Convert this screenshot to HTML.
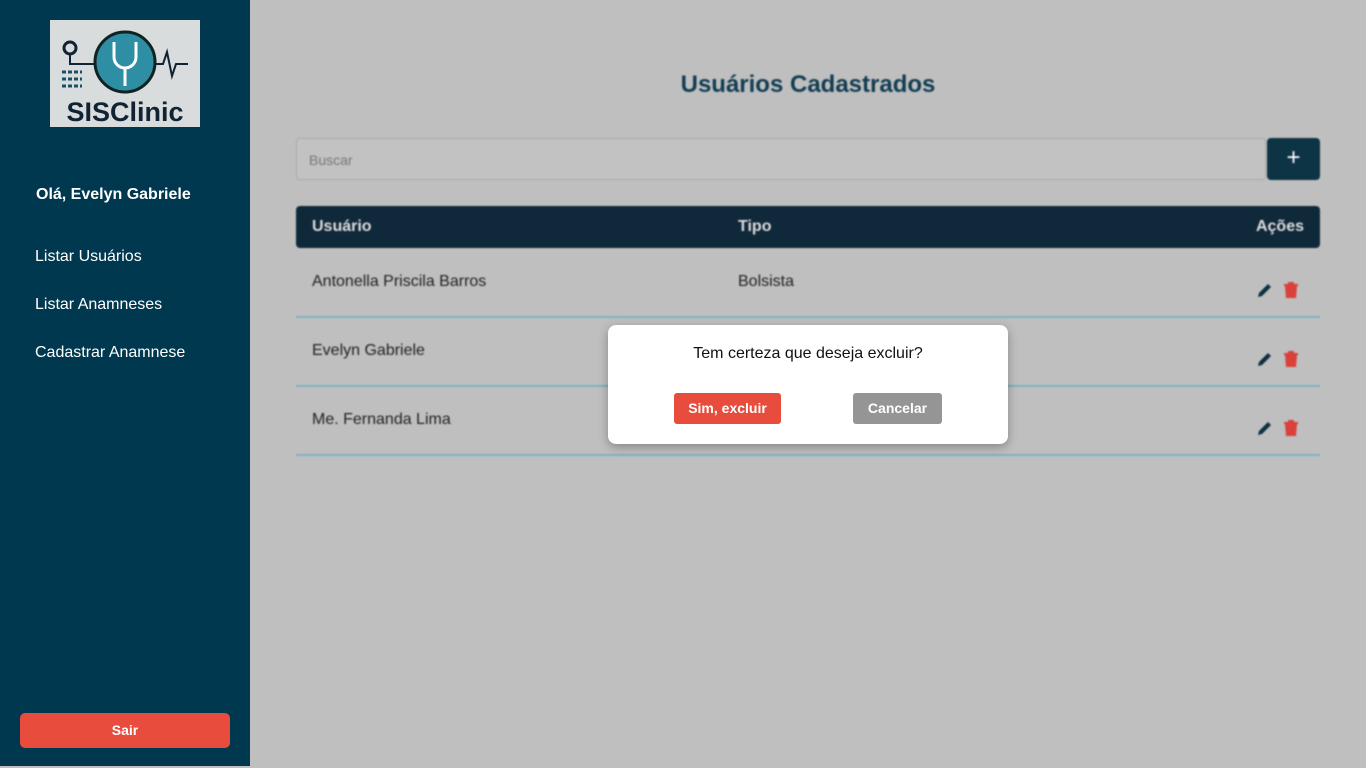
<!DOCTYPE html>
<html><head><meta charset="utf-8"><style>
*{margin:0;padding:0;box-sizing:border-box}
body{width:1366px;height:768px;overflow:hidden;font-family:"Liberation Sans",sans-serif;background:#bfbfbf;position:relative}
.side{position:absolute;left:0;top:0;width:250px;height:766px;background:#00384f;color:#fff}
.logo{position:absolute;left:50px;top:20px;width:150px;height:107px;background:#d8dcdc}
.hello{position:absolute;left:36px;top:186px;font-weight:bold;font-size:16px}
.nav{position:absolute;left:35px;font-size:16px}
.sair{position:absolute;left:20px;top:713px;width:210px;height:35px;background:#e74c3c;border-radius:5px;color:#fff;font-weight:bold;font-size:14px;text-align:center;line-height:35px}
.main{position:absolute;left:250px;top:0;right:0;height:766px;filter:blur(0.8px)}
h1{position:absolute;left:0;right:0;top:71px;text-align:center;font-size:24px;color:#123d52}
.search{position:absolute;left:46px;top:138px;width:970px;height:42px;border:1px solid #aaa;border-radius:4px;background:#c2c2c2;font-size:14px;color:#777;padding:13px 12px}
.add{position:absolute;left:1017px;top:138px;width:53px;height:42px;background:#0c3444;border-radius:4px;color:#fff;font-size:24px;text-align:center;line-height:40px}
.th{position:absolute;left:46px;top:206px;width:1024px;height:42px;background:#10293a;border-radius:4px;color:#ddd;font-weight:bold;font-size:16px}
.th span,.row span{position:absolute;top:12px}
.row{position:absolute;left:46px;width:1024px;height:69px;border-bottom:2px solid #7fb3c2;font-size:16px;color:#222}
.ic{position:absolute;top:32px}
.modal{position:absolute;left:608px;top:325px;width:400px;height:119px;background:#fff;border-radius:8px;box-shadow:0 3px 10px rgba(0,0,0,.3);text-align:center}
.modal p{margin-top:20px;font-size:16px;color:#111}
.b{position:absolute;top:68px;height:31px;line-height:31px;color:#fff;font-weight:bold;font-size:14px;border-radius:3px}
</style></head><body>
<div class="side">
<div class="logo"><svg width="150" height="107" viewBox="0 0 150 107">
<circle cx="20" cy="28" r="6" fill="none" stroke="#123" stroke-width="3"/><path d="M20 34v10h28" stroke="#123" stroke-width="2" fill="none"/>
<circle cx="75" cy="42" r="30" fill="#2e8ea3" stroke="#122" stroke-width="3"/>
<path d="M64 22v15a11 11 0 0 0 22 0v-15M75 48v18" stroke="#fff" stroke-width="3" fill="none"/>
<path d="M105 44h8l4-12 5 24 4-12h12" stroke="#123" stroke-width="2" fill="none"/>
<path d="M12 52h20M12 59h20M12 66h20" stroke="#1a4f6a" stroke-width="3" stroke-dasharray="4 2"/>
<text x="75" y="101" text-anchor="middle" font-family="Liberation Sans" font-weight="bold" font-size="27" fill="#123">SISClinic</text></svg></div>
<div class="hello">Olá, Evelyn Gabriele</div>
<div class="nav" style="top:248px">Listar Usuários</div>
<div class="nav" style="top:296px">Listar Anamneses</div>
<div class="nav" style="top:344px">Cadastrar Anamnese</div>
<div class="sair">Sair</div>
</div>
<div class="main">
<h1>Usuários Cadastrados</h1>
<div class="search">Buscar</div>
<div class="add">+</div>
<div class="th"><span style="left:16px">Usuário</span><span style="left:442px">Tipo</span><span style="right:16px">Ações</span></div>
<div class="row" style="top:249px"><span style="left:16px;top:24px">Antonella Priscila Barros</span><span style="left:442px;top:24px">Bolsista</span>
<svg class="ic" style="left:960px" width="18" height="18" viewBox="0 0 18 18"><path d="M2 16l1-4 9-9 3 3-9 9z" fill="#0f3040"/></svg><svg class="ic" style="left:987px" width="16" height="18" viewBox="0 0 16 18"><path d="M1 3h14v2H1zM5 1h6v2H5zM2 5h12l-1 12H3z" fill="#d9413a"/></svg></div>
<div class="row" style="top:318px"><span style="left:16px;top:24px">Evelyn Gabriele</span>
<svg class="ic" style="left:960px" width="18" height="18" viewBox="0 0 18 18"><path d="M2 16l1-4 9-9 3 3-9 9z" fill="#0f3040"/></svg><svg class="ic" style="left:987px" width="16" height="18" viewBox="0 0 16 18"><path d="M1 3h14v2H1zM5 1h6v2H5zM2 5h12l-1 12H3z" fill="#d9413a"/></svg></div>
<div class="row" style="top:387px"><span style="left:16px;top:24px">Me. Fernanda Lima</span>
<svg class="ic" style="left:960px" width="18" height="18" viewBox="0 0 18 18"><path d="M2 16l1-4 9-9 3 3-9 9z" fill="#0f3040"/></svg><svg class="ic" style="left:987px" width="16" height="18" viewBox="0 0 16 18"><path d="M1 3h14v2H1zM5 1h6v2H5zM2 5h12l-1 12H3z" fill="#d9413a"/></svg></div>
</div>
<div class="modal"><p>Tem certeza que deseja excluir?</p>
<div class="b" style="left:66px;width:107px;background:#e74c3c">Sim, excluir</div>
<div class="b" style="left:245px;width:89px;background:#959595">Cancelar</div></div>
</body></html>
